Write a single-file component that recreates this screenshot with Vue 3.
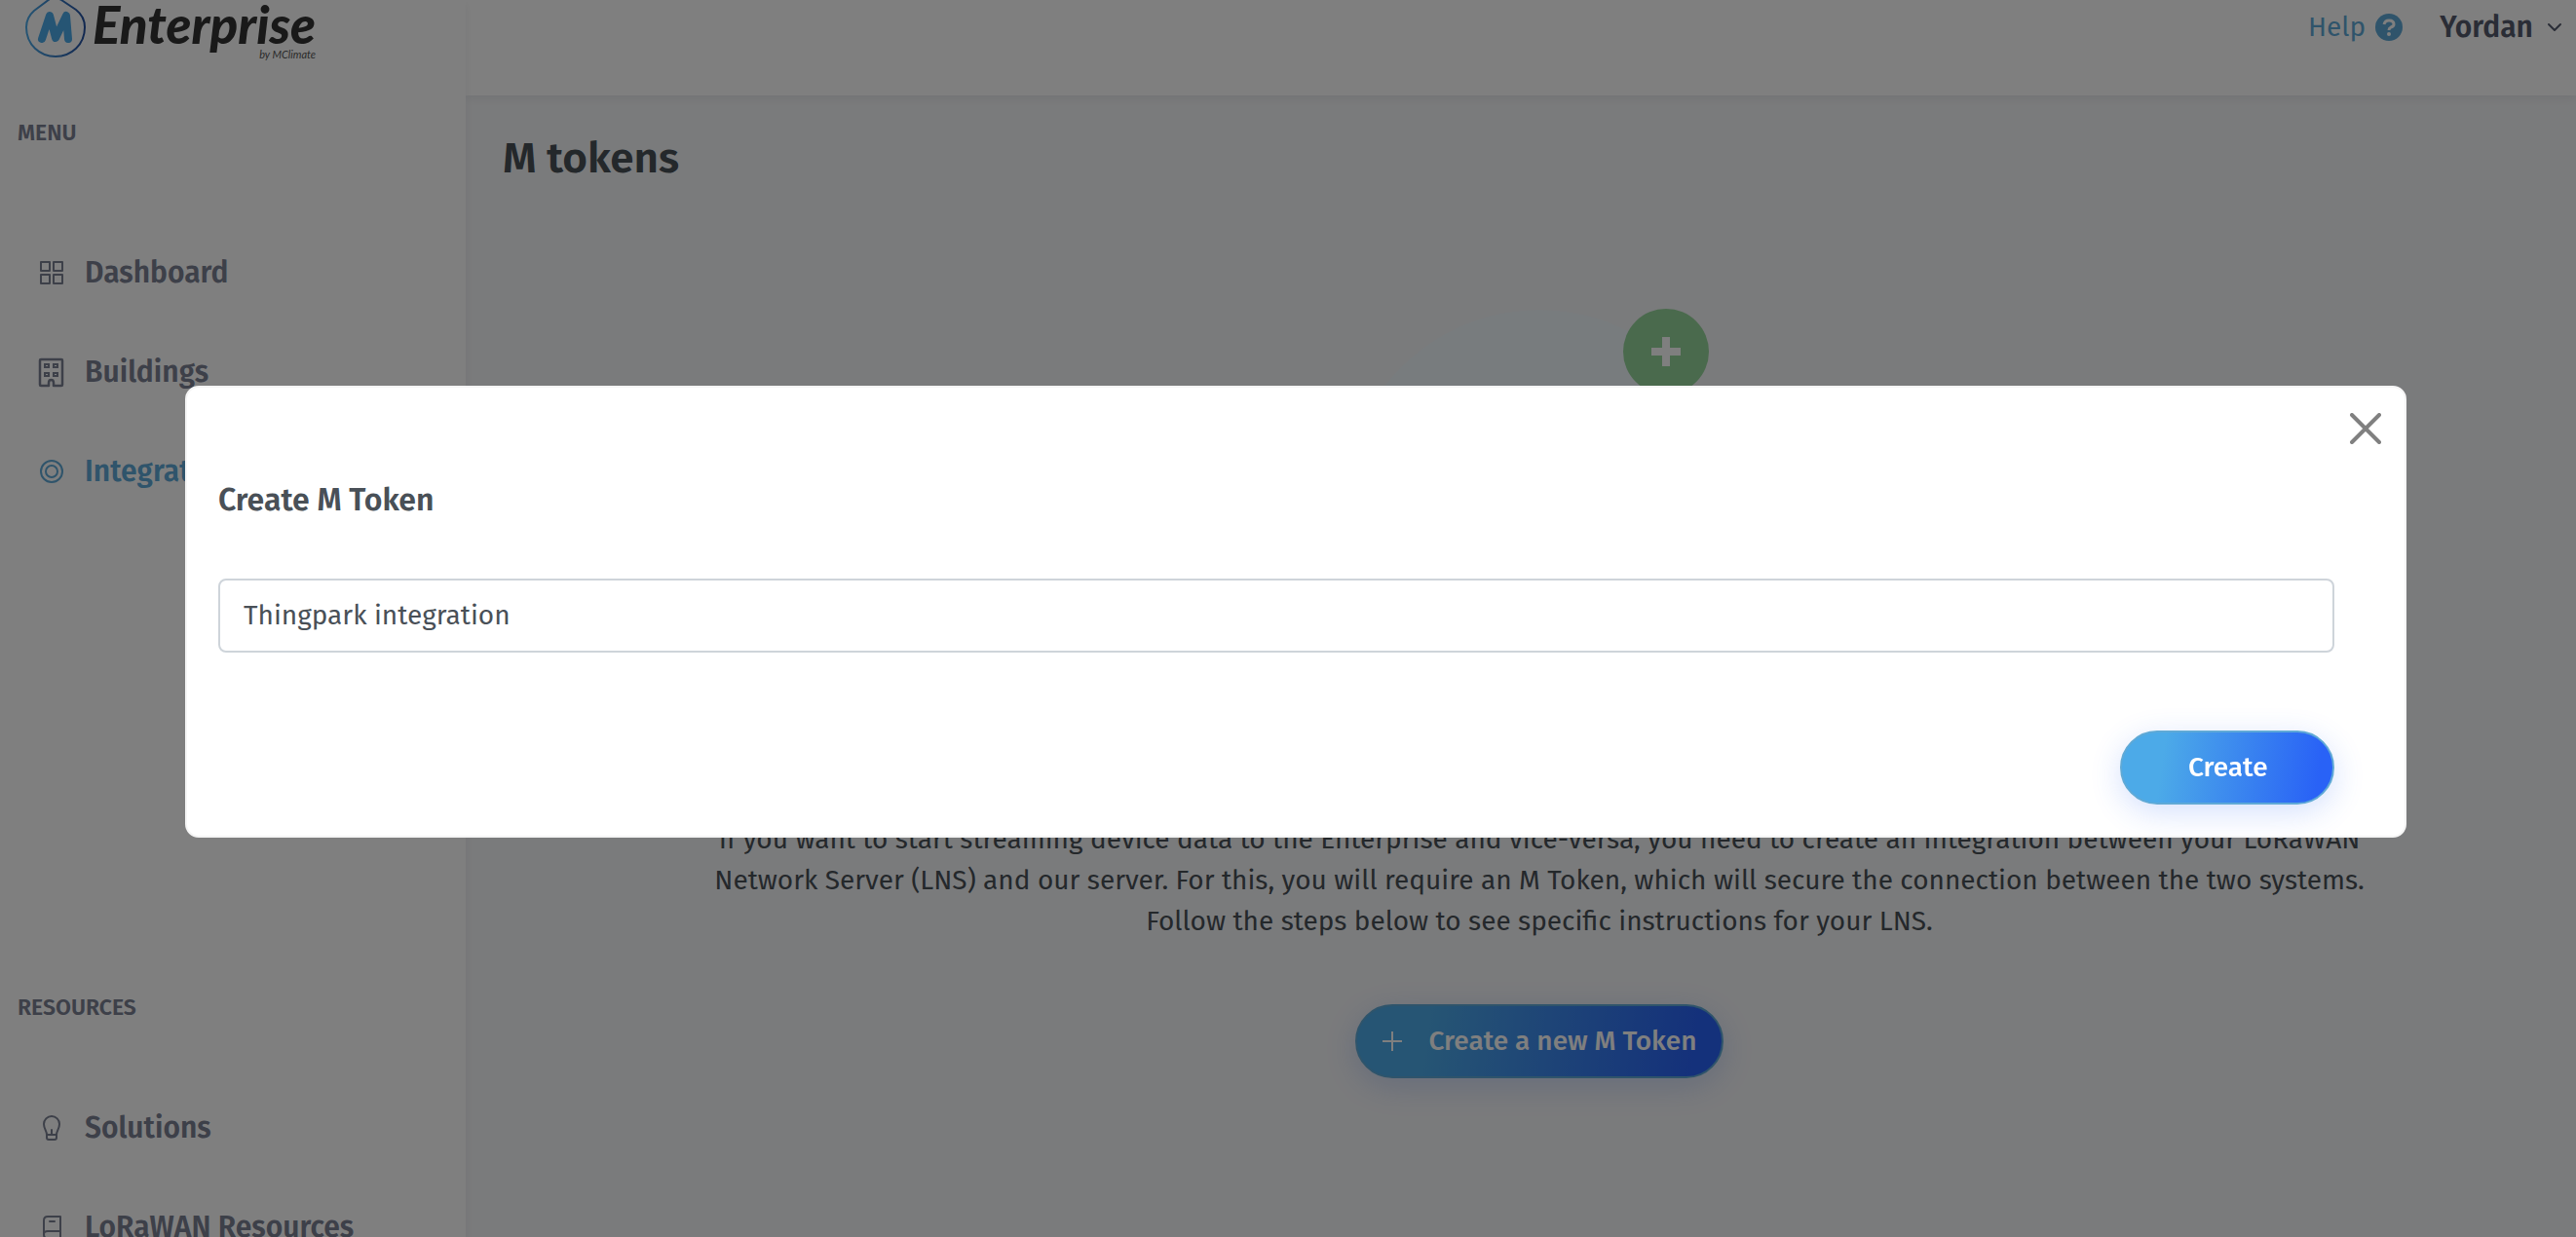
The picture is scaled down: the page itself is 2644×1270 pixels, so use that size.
<script setup>
import { ref } from 'vue'

const tokenName = ref('Thingpark integration')
const menu = [
  { label: 'Dashboard', icon: 'grid' },
  { label: 'Buildings', icon: 'building' },
  { label: 'Integrations', icon: 'target', active: true },
]
const resources = [
  { label: 'Solutions', icon: 'bulb' },
  { label: 'LoRaWAN Resources', icon: 'book' },
]
const groups = [
  { title: 'MENU', items: menu },
  { title: 'RESOURCES', items: resources },
]
</script>

<template>
  <div class="app">
    <aside class="sidebar">
      <a href="#" class="logo" aria-label="Enterprise by MClimate">
        <svg class="logo-mark" width="64" height="64" viewBox="0 0 64 64" fill="none">
          <defs>
            <linearGradient id="ring" x1="0" y1="0" x2="1" y2="0">
              <stop offset="0" stop-color="#4caae8" />
              <stop offset="1" stop-color="#2450a0" />
            </linearGradient>
          </defs>
          <path d="M26 3Q32 0 38 4L53 14Q62 21 62 32C62 50 48 62 32 62S2 50 2 32Q2 22 10 15Z" stroke="url(#ring)" stroke-width="2" />
          <path d="M18 44 26 20 32 43 43 20 45 44" stroke="#4caae8" stroke-width="8" stroke-linecap="round" stroke-linejoin="round" />
        </svg>
        <span class="logo-words">
          <span class="logo-name">Enterprise</span>
          <span class="logo-by">by MClimate</span>
        </span>
      </a>

      <nav v-for="group in groups" :key="group.title" class="group">
        <h2>{{ group.title }}</h2>
        <a v-for="item in group.items" :key="item.label" href="#" class="item" :class="{ active: item.active }">
          <svg width="32" height="32" viewBox="0 0 32 32" fill="none" stroke="currentColor" stroke-width="2" stroke-linejoin="round" stroke-linecap="round">
            <g v-if="item.icon === 'grid'">
              <rect x="5" y="5" width="9" height="9" /><rect x="18" y="5" width="9" height="9" />
              <rect x="5" y="18" width="9" height="9" /><rect x="18" y="18" width="9" height="9" />
            </g>
            <g v-else-if="item.icon === 'building'">
              <path d="M13 30H5Q4 30 4 29V4Q4 3 5 3H26Q27 3 27 4V29Q27 30 26 30H18V27Q18 24 15.500 24T13 27Z" stroke-width="2.500" />
              <path d="M9 8h4v3H9ZM18 8h4v3h-4ZM9 17h4v3H9ZM18 17h4v3h-4Z" stroke-linejoin="miter" />
            </g>
            <g v-else-if="item.icon === 'target'">
              <circle cx="16" cy="16" r="11" /><circle cx="16" cy="16" r="6" />
            </g>
            <g v-else-if="item.icon === 'bulb'">
              <path d="M11 23C11 19 8 17 8 12A8 8 0 0 1 24 12C24 17 21 19 21 23V26Q21 28 19 28H13Q11 28 11 26ZM11 23H21M16 23V18" />
            </g>
            <g v-else>
              <path d="M8 23V9Q8 5 12 5H25V27H10Q8 27 8 23Q8 20 12 20H25M14 10H19" />
            </g>
          </svg>
          <span>{{ item.label }}</span>
        </a>
      </nav>
    </aside>

    <div class="page">
      <header class="topbar">
        <a href="#" class="help">Help
          <svg width="28" height="28" viewBox="0 0 28 28">
            <circle cx="14" cy="14" r="14" fill="currentColor" />
            <path d="M9 11Q10 7 14 7Q19 7 19 11Q19 13 16 14Q14 15 14 17" fill="none" stroke="#fff" stroke-width="3" />
            <circle cx="14" cy="21" r="2" fill="#fff" />
          </svg>
        </a>
        <button type="button" class="user">Yordan
          <svg width="16" height="16" viewBox="0 0 16 16" fill="none" stroke="currentColor" stroke-width="2" stroke-linecap="round" stroke-linejoin="round"><path d="M2 5l6 6 6-6" /></svg>
        </button>
      </header>

      <main class="content">
        <h1>M tokens</h1>
        <svg class="art" width="400" height="500" viewBox="0 0 400 500">
          <circle cx="200" cy="201" r="200" fill="#f1f8fc" />
          <circle cx="330" cy="44" r="44" fill="#94d49a" />
          <path d="M315 44H345M330 29V59" stroke="#fff" stroke-width="8" />
        </svg>
        <p>
          If you want to start streaming device data to the Enterprise and vice-versa, you need to create an integration between your LoRaWAN<br>
          Network Server (LNS) and our server. For this, you will require an M Token, which will secure the connection between the two systems.<br>
          Follow the steps below to see specific instructions for your LNS.
        </p>
        <button type="button" class="pill new-token">
          <svg width="20" height="20" viewBox="0 0 20 20" stroke="currentColor" stroke-width="2"><path d="M10 0V20M0 10H20" /></svg>
          Create a new M Token
        </button>
      </main>
    </div>

    <div class="overlay">
      <form class="modal" role="dialog" aria-labelledby="modal-title" @submit.prevent>
        <button type="button" class="close" aria-label="Close">
          <svg width="32" height="32" viewBox="0 0 32 32" stroke="#808080" stroke-width="4" stroke-linecap="round"><path d="M2 2 30 30M30 2 2 30" /></svg>
        </button>
        <label id="modal-title" for="token-name">Create M Token</label>
        <input id="token-name" v-model="tokenName" type="text">
        <button type="submit" class="pill">Create</button>
      </form>
    </div>
  </div>
</template>

<style>
body {
  margin: 0;
}
</style>

<style scoped>
* {
  box-sizing: border-box;
}
.app {
  display: flex;
  height: 100vh;
  overflow: hidden;
  font-family: "Fira Sans", "Noto Sans", sans-serif;
  font-size: 28px;
  line-height: 42px;
  color: #495057;
}
a {
  text-decoration: none;
  color: inherit;
}
button,
input {
  font: inherit;
}
.sidebar {
  position: relative;
  z-index: 1;
  flex: none;
  width: 478px;
  background: #fff;
  box-shadow: 0 4px 8px rgba(15, 34, 58, 0.06);
}
.logo {
  display: flex;
  gap: 6px;
  height: 98px;
  padding-left: 25px;
}
.logo-mark {
  flex: none;
  margin-top: -4px;
}
.logo-words {
  display: flex;
  flex-direction: column;
  align-items: flex-end;
}
.logo-name {
  font: italic 900 53px/50px Lato, sans-serif;
  color: #333;
}
.logo-by {
  font: italic 11px/12px Lato, sans-serif;
  color: #555;
}
.group {
  display: flex;
  flex-direction: column;
  height: 898px;
}
.group h2 {
  margin: 16px 0 71px 18px;
  font-size: 23px;
  line-height: 44px;
  font-weight: 600;
  color: #7b8092;
}
.group + .group h2 {
  margin-bottom: 51px;
}
.item {
  display: flex;
  align-items: center;
  gap: 18px;
  height: 102px;
  flex: none;
  padding-left: 37px;
  font-size: 30px;
  font-weight: 600;
  color: #7b8092;
}
.active {
  color: #5fa9d6;
}
.page {
  flex: 1;
  min-width: 0;
  background: #f5f6f8;
}
.topbar {
  display: flex;
  justify-content: flex-end;
  gap: 38px;
  height: 98px;
  padding: 7px 14px 0 0;
  background: #fff;
  box-shadow: 0 4px 8px rgba(15, 34, 58, 0.06);
}
.help,
.user {
  display: flex;
  align-items: center;
  gap: 10px;
  height: 42px;
}
.help {
  color: #5fa9d6;
}
.user {
  gap: 14px;
  padding: 0;
  border: 0;
  background: none;
  font-size: 30px;
  font-weight: 600;
  color: #555b6d;
}
.content {
  display: flex;
  flex-direction: column;
  align-items: center;
  padding-left: 38px;
}
h1 {
  align-self: flex-start;
  margin: 38px 0 0;
  font-size: 44px;
  line-height: 54px;
  font-weight: 600;
}
.art {
  margin-top: 127px;
}
p {
  margin: 24px 0 64px;
  text-align: center;
  white-space: nowrap;
}
.pill {
  height: 76px;
  padding: 0 68px;
  border: 2px solid #5fa9d6;
  border-radius: 38px;
  background: linear-gradient(98deg, #4caae8 20%, #2962f6 92%);
  box-shadow: 0 8px 32px rgba(41, 98, 246, 0.2);
  color: #fff;
  font-weight: 500;
}
.new-token {
  display: flex;
  align-items: center;
  gap: 28px;
  padding: 0 26px;
}
.overlay {
  position: fixed;
  inset: 0;
  z-index: 2;
  padding: 396px 174px 0 190px;
  background: rgba(0, 0, 0, 0.5);
}
.modal {
  display: flex;
  flex-direction: column;
  height: 464px;
  padding: 26px 72px 32px 32px;
  border: 2px solid #f5f5f5;
  border-radius: 14px;
  background: #fff;
}
.close {
  align-self: flex-end;
  display: flex;
  margin-right: -48px;
  padding: 0;
  border: 0;
  background: none;
}
.modal label {
  margin: 36px 0 60px;
  font-size: 32px;
  font-weight: 600;
}
.modal input {
  height: 76px;
  padding: 0 24px 2px;
  border: 2px solid #ced4da;
  border-radius: 8px;
  background: #fff;
  color: #495057;
}
.modal .pill {
  align-self: flex-end;
  width: 220px;
  margin-top: 80px;
}
</style>
